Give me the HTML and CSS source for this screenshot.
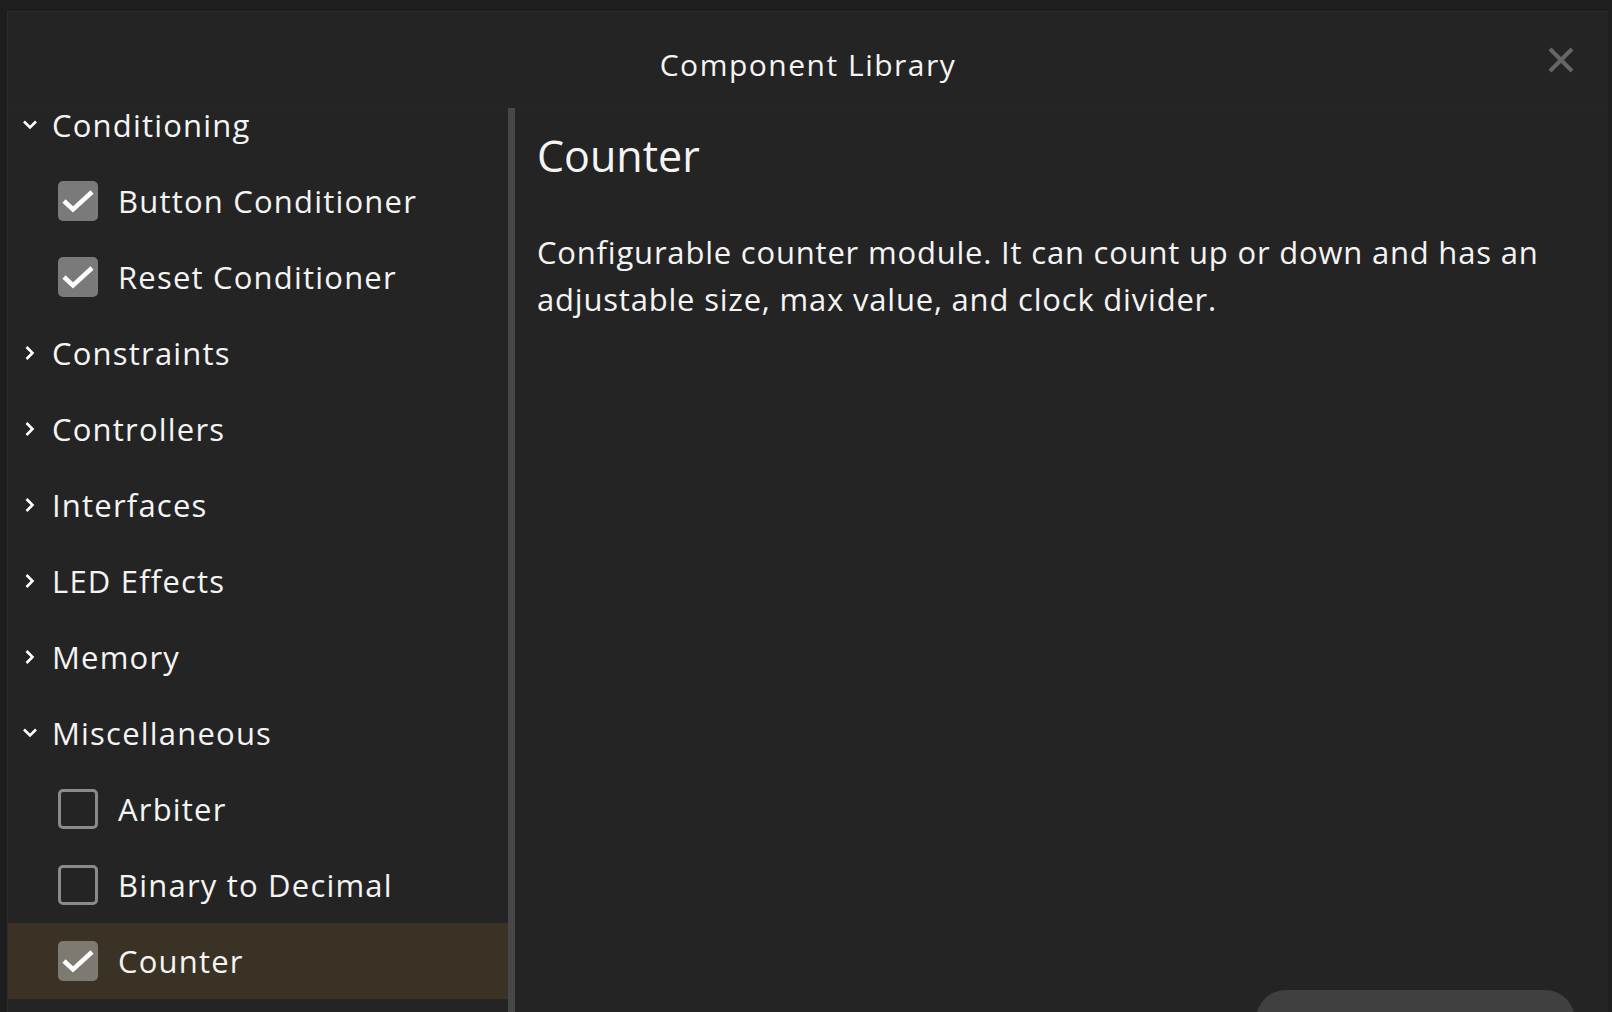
FILE: index.html
```html
<!DOCTYPE html>
<html lang="en">
<head>
<meta charset="utf-8">
<title>Component Library</title>
<link rel="stylesheet" href="styles.css">
</head>
<body>
<div class="dialog">
  <header class="header">
    <div></div>
    <h1 class="title">Component Library</h1>
    <button class="close" aria-label="Close">
      <svg viewBox="0 0 26 26" width="26" height="26"><path d="M2 2 L24 24 M24 2 L2 24" stroke="#666" stroke-width="4" fill="none"/></svg>
    </button>
  </header>
  <div class="body">
    <nav class="sidebar">
      <ul class="list">
        <li class="row cat first"><svg class="chev" viewBox="0 0 16 16"><polyline points="2,4.5 8,10.5 14,4.5"/></svg><span>Conditioning</span></li>
        <li class="row item"><span class="box checked"><svg viewBox="0 0 40 40"><polyline points="6,20 15,28.5 34,11"/></svg></span><span>Button Conditioner</span></li>
        <li class="row item"><span class="box checked"><svg viewBox="0 0 40 40"><polyline points="6,20 15,28.5 34,11"/></svg></span><span>Reset Conditioner</span></li>
        <li class="row cat"><svg class="chev" viewBox="0 0 16 16"><polyline points="4.5,2 10.5,8 4.5,14"/></svg><span>Constraints</span></li>
        <li class="row cat"><svg class="chev" viewBox="0 0 16 16"><polyline points="4.5,2 10.5,8 4.5,14"/></svg><span>Controllers</span></li>
        <li class="row cat"><svg class="chev" viewBox="0 0 16 16"><polyline points="4.5,2 10.5,8 4.5,14"/></svg><span>Interfaces</span></li>
        <li class="row cat"><svg class="chev" viewBox="0 0 16 16"><polyline points="4.5,2 10.5,8 4.5,14"/></svg><span>LED Effects</span></li>
        <li class="row cat"><svg class="chev" viewBox="0 0 16 16"><polyline points="4.5,2 10.5,8 4.5,14"/></svg><span>Memory</span></li>
        <li class="row cat"><svg class="chev" viewBox="0 0 16 16"><polyline points="2,4.5 8,10.5 14,4.5"/></svg><span>Miscellaneous</span></li>
        <li class="row item"><span class="box"></span><span>Arbiter</span></li>
        <li class="row item"><span class="box"></span><span>Binary to Decimal</span></li>
        <li class="row item selected"><span class="box checked"><svg viewBox="0 0 40 40"><polyline points="6,20 15,28.5 34,11"/></svg></span><span>Counter</span></li>
      </ul>
    </nav>
    <div class="scrollbar"></div>
    <main class="main">
      <h2 class="heading">Counter</h2>
      <p class="desc">Configurable counter module. It can count up or down and has an adjustable size, max value, and clock divider.</p>
      <button class="action"></button>
    </main>
  </div>
</div>
</body>
</html>
```

FILE: styles.css
```css
* { box-sizing: border-box; }
html, body {
  margin: 0;
  padding: 0;
  background: #1e1e1e;
  overflow: hidden;
  width: 1612px;
  height: 1012px;
}
body {
  font-family: "Open Sans", "Noto Sans", sans-serif;
  font-weight: 500;
  color: #f4f4f4;
}
.dialog {
  margin: 11px 0 0 7px;
  width: 1601px;
  height: 1100px;
  background: #242424;
  border-top: 1px solid #2b2b2b;
  border-left: 1px solid #2b2b2b;
}
.header {
  display: grid;
  grid-template-columns: 1fr auto 1fr;
  height: 96px;
  padding-top: 33px;
  border-bottom: 1px solid #272727;
}
.title {
  margin: 0;
  font-size: 30px;
  font-weight: 500;
  line-height: 40px;
  letter-spacing: 1.5px;
}
.close {
  justify-self: end;
  align-self: start;
  margin: 2px 34px 0 0;
  padding: 0;
  border: 0;
  background: none;
  width: 26px;
  height: 26px;
  display: block;
}
.close svg { display: block; }
.body {
  display: flex;
  height: 904px;
}
.sidebar {
  width: 500px;
  flex: none;
}
.list {
  list-style: none;
  margin: 0;
  padding: 0;
}
.row {
  height: 76px;
  display: flex;
  align-items: center;
  font-size: 31px;
  line-height: 34px;
  letter-spacing: 1.2px;
  white-space: nowrap;
}
.row.first {
  height: 55px;
  padding-bottom: 21px;
}
.cat { padding-left: 14px; }
.chev {
  width: 16px;
  height: 16px;
  margin-right: 14px;
  fill: none;
  stroke: #fff;
  stroke-width: 2.6;
  flex: none;
}
.item { padding-left: 50px; }
.box {
  width: 40px;
  height: 40px;
  border-radius: 5px;
  border: 3px solid #8a8a8a;
  margin-right: 20px;
  flex: none;
  display: block;
}
.box.checked {
  background: #7a7a7a;
  border: 0;
}
.box svg {
  display: block;
  width: 40px;
  height: 40px;
  fill: none;
  stroke: #fff;
  stroke-width: 4.5;
}
.selected { background: #3a3224; }
.selected .box.checked { background: #7e7a70; }
.scrollbar {
  width: 7px;
  flex: none;
  background: #474747;
}
.main {
  flex: 1;
  display: flex;
  flex-direction: column;
  padding: 22px 33px 0 22px;
}
.heading {
  margin: 0;
  font-size: 43px;
  font-weight: 500;
  line-height: 52px;
}
.desc {
  margin: 47px 0 0 0;
  font-size: 31px;
  line-height: 47px;
  letter-spacing: 0.8px;
  max-width: 1040px;
}
.action {
  margin-top: auto;
  margin-bottom: -38px;
  align-self: flex-end;
  width: 319px;
  height: 60px;
  border: 0;
  border-radius: 30px;
  background: #404040;
  flex: none;
}
```
